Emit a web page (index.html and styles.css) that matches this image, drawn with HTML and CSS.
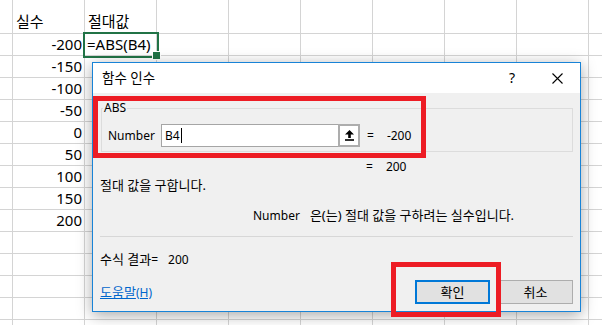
FILE: index.html
```html
<!DOCTYPE html>
<html lang="ko">
<head>
<meta charset="utf-8">
<title>함수 인수</title>
<link rel="stylesheet" href="styles.css">
</head>
<body>
<div class="sheet">
  <div class="row first"><div class="cell"></div><div class="cell txt">실수</div><div class="cell txt">절대값</div></div>
  <div class="row"><div class="cell"></div><div class="cell num">-200</div><div class="cell txt sel">=ABS(B4)</div></div>
  <div class="row"><div class="cell"></div><div class="cell num">-150</div><div class="cell"></div></div>
  <div class="row"><div class="cell"></div><div class="cell num">-100</div><div class="cell"></div></div>
  <div class="row"><div class="cell"></div><div class="cell num">-50</div><div class="cell"></div></div>
  <div class="row"><div class="cell"></div><div class="cell num">0</div><div class="cell"></div></div>
  <div class="row"><div class="cell"></div><div class="cell num">50</div><div class="cell"></div></div>
  <div class="row"><div class="cell"></div><div class="cell num">100</div><div class="cell"></div></div>
  <div class="row"><div class="cell"></div><div class="cell num">150</div><div class="cell"></div></div>
  <div class="row"><div class="cell"></div><div class="cell num">200</div><div class="cell"></div></div>
  <div class="row"></div>
  <div class="row"></div>
  <div class="row"></div>
  <div class="row"></div>
</div>

<div class="dialog">
  <div class="titlebar">
    <span class="title ko">함수 인수</span>
    <span class="help">?</span>
    <span class="close"><svg width="11" height="11" viewBox="0 0 11 11"><path d="M0.5 0.5L10.5 10.5M10.5 0.5L0.5 10.5" stroke="#000" stroke-width="1.1" fill="none"/></svg></span>
  </div>
  <div class="dbody">
    <fieldset class="group">
      <legend>ABS</legend>
      <div class="argrow">
        <span class="arglabel">Number</span>
        <div class="input">B4<span class="caret"></span></div>
        <span class="ref"><svg width="9" height="11" viewBox="0 0 9 11"><path d="M4.5 0L0 4.6H3.2V8H5.8V4.6H9Z" fill="#000"/><rect x="0" y="9.2" width="9" height="1.6" fill="#000"/></svg></span>
        <span class="eq">=</span>
        <span class="val">-200</span>
      </div>
    </fieldset>
    <div class="result"><span class="eq">=</span><span class="val">200</span></div>
    <p class="desc"><span class="ko">절대 값을 구합니다.</span></p>
    <p class="argdesc"><span class="argname">Number</span><span class="ko">은(는) 절대 값을 구하려는 실수입니다.</span></p>
    <hr class="sep">
    <p class="formula"><span class="ko">수식 결과</span>=<span class="fval">200</span></p>
    <div class="footer">
      <a class="helplink"><span class="ko">도움말</span>(H)</a>
      <div class="btns">
        <span class="btn primary ko">확인</span>
        <span class="btn ko">취소</span>
      </div>
    </div>
  </div>
</div>

<div class="mark mark1"></div>
<div class="mark mark2"></div>
</body>
</html>
```

FILE: styles.css
```css
* { box-sizing: border-box; }
html, body { margin: 0; padding: 0; }
body {
  width: 602px;
  height: 325px;
  overflow: hidden;
  position: relative;
  background: #fff;
  font-family: "Noto Sans", "Noto Sans CJK KR", sans-serif;
  color: #000;
}

/* spreadsheet */
.sheet {
  height: 325px;
  font-size: 15px;
  background-image: linear-gradient(to right, transparent 71px, #d4d4d4 71px);
  background-size: 72px 100%;
  background-position: 13px 0;
}
.row {
  display: grid;
  grid-template-columns: 13px 72px 72px;
  height: 22px;
  border-bottom: 1px solid #d4d4d4;
}
.row.first { height: 34px; }
.cell {
  position: relative;
  height: 100%;
  display: flex;
  align-items: flex-end;
  line-height: 20px;
  padding-bottom: 2px;
  white-space: nowrap;
}
.num { justify-content: flex-end; padding-right: 3px; }
.txt { padding-left: 3px; }
.sel {
  outline: 2px solid #217346;
  padding-left: 2px;
}
.sel::after {
  content: "";
  position: absolute;
  right: -4px;
  bottom: -4px;
  width: 7px;
  height: 7px;
  background: #217346;
  border: 1px solid #fff;
}

/* dialog */
.dialog {
  position: absolute;
  left: 92px;
  top: 62px;
  width: 489px;
  height: 250px;
  border: 1px solid #1883d7;
  background: #f0f0f0;
  box-shadow: 0 3px 14px rgba(0, 0, 0, 0.35);
  font-size: 12px;
  line-height: 16px;
}
.ko { font-size: 13px; }
.titlebar {
  height: 30px;
  background: #fff;
  display: flex;
  align-items: center;
  padding-left: 9px;
  padding-right: 8px;
}
.title { flex: 1; font-size: 13.5px; }
.help {
  width: 20px;
  text-align: center;
  font-size: 14px;
  margin-right: 20px;
}
.close {
  width: 30px;
  display: flex;
  justify-content: center;
  align-items: center;
}
.close svg { display: block; }

.dbody { padding: 0 7px; }
.group {
  margin: 7px 0 0 1px;
  padding: 8px 6px 4px 6px;
  border: 1px solid #dcdcdc;
  min-width: 0;
}
.group legend {
  padding: 0 1px;
  margin-left: -5px;
  line-height: 16px;
}
.argrow {
  display: flex;
  align-items: center;
  height: 23px;
}
.arglabel { width: 53px; }
.input {
  width: 177px;
  height: 23px;
  background: #fff;
  border: 1px solid #a5a5a5;
  border-right: 0;
  padding-left: 3px;
  display: flex;
  align-items: center;
}
.caret {
  display: inline-block;
  width: 1px;
  height: 15px;
  background: #000;
  margin-left: 1px;
}
.ref {
  width: 22px;
  height: 23px;
  border: 2px solid #adadad;
  background: #fff;
  display: flex;
  align-items: center;
  justify-content: center;
}
.ref svg { display: block; }
.eq { margin-left: 7px; }
.val { margin-left: 13px; }

.result {
  margin: 7px 0 0 259px;
}
.desc { margin: 2px 0 0 0; }
.argdesc { margin: 13px 0 0 0; padding-left: 153px; }
.argname { margin-right: 10px; }
.sep {
  margin: 12px 0 0 0;
  border: 0;
  border-top: 1px solid #d7d7d7;
  height: 0;
}
.formula { margin: 14px 0 0 0; }
.fval { margin-left: 10px; }

.footer {
  margin-top: 12px;
  height: 24px;
  display: flex;
  align-items: center;
  justify-content: space-between;
}
.helplink {
  color: #0066cc;
  text-decoration: underline;
}
.btns { display: flex; gap: 8px; }
.btn {
  width: 75px;
  height: 24px;
  border: 1px solid #adadad;
  background: #e1e1e1;
  display: flex;
  align-items: center;
  justify-content: center;
}
.btn.primary { border: 2px solid #0078d7; }

/* annotation boxes */
.mark {
  position: absolute;
  border: 5px solid #ed1c24;
}
.mark1 { left: 93px; top: 96px; width: 333px; height: 62px; }
.mark2 { left: 391px; top: 262px; width: 110px; height: 55px; }
```
